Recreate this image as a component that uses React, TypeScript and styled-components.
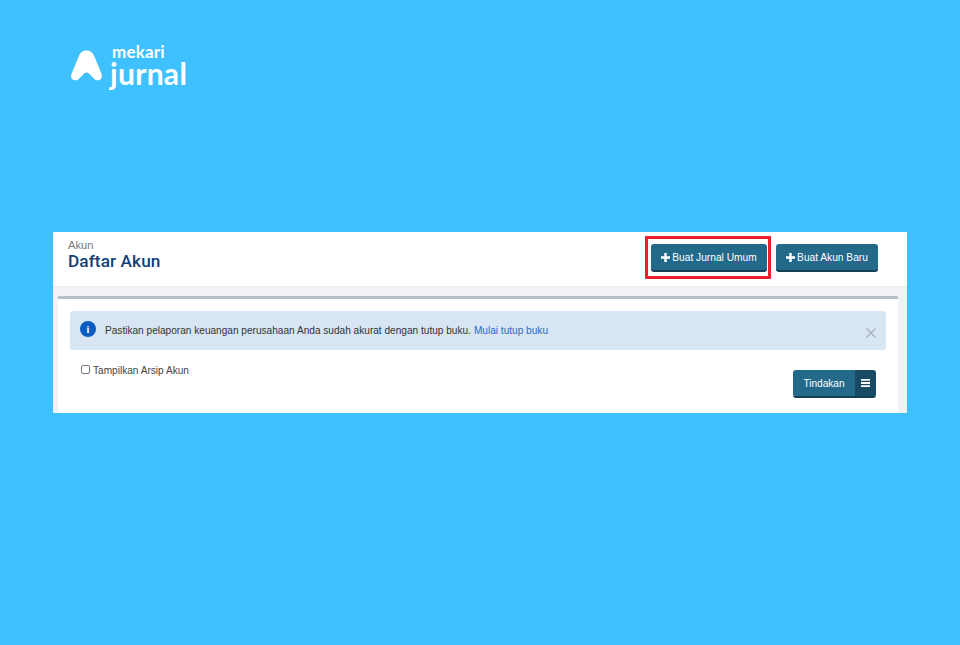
import React from "react";
import styled, { createGlobalStyle } from "styled-components";

const Global = createGlobalStyle`
  html, body { margin: 0; padding: 0; background: #40c1ff; }
  * { box-sizing: border-box; }
  body { font-family: "Liberation Sans", Arial, sans-serif; }
`;
const Page = styled.div`
  width: 960px; height: 645px; background: #40c1ff; overflow: hidden;
  padding: 44px 53px 0; display: flex; flex-direction: column;
`;
const Logo = styled.div`
  display: flex; align-items: flex-start; gap: 6px; margin-left: 18px; height: 188px;
  color: #fff; font-family: Lato, sans-serif;
`;
const LogoMark = styled.svg`margin-top: 5px; flex: none;`;
const LogoWords = styled.div`display: flex; flex-direction: column;`;
const LogoTop = styled.span`font-size: 17px; font-weight: 700; line-height: 15px; letter-spacing: .2px; margin-left: 3px;`;
const LogoMain = styled.span`font-size: 30px; font-weight: 700; line-height: 28px; letter-spacing: .3px; margin-left: 1px;`;
const Panel = styled.div`width: 854px; height: 181px; background: #f0f2f7; display: flex; flex-direction: column; overflow: hidden;`;
const Header = styled.div`
  height: 55px; flex: none; background: #fff; border-bottom: 1px solid #e8eaee;
  display: flex; justify-content: space-between; padding: 7px 29px 0 15px;
`;
const Crumb = styled.div`font-size: 11.2px; line-height: 12px; color: #7a7a7a;`;
const Title = styled.h1`margin: 0; font: 500 17.2px/20px Roboto, sans-serif; color: #133f78; letter-spacing: .1px;`;
const Actions = styled.div`display: flex; gap: 5px; padding-top: 5px; align-items: flex-start;`;
const Highlight = styled.div`border: 3px solid #e9202b; margin-top: -8px; padding: 5px 1px 4px 3px; border-radius: 1px;`;
const Btn = styled.button`
  height: 28px; border: 0; border-bottom: 2px solid #143f55; border-radius: 3px; background: #22698a; color: #fff;
  font: 10.2px "Liberation Sans", Arial, sans-serif; white-space: nowrap; display: flex; align-items: center; justify-content: center;
  gap: 2px; padding: 1px 0 0; width: ${p => p.$w}px;
`;
const Body = styled.div`flex: 1; padding: 9px 9px 0 5px;`;
const Card = styled.div`height: 100%; background: #fff; border-top: 3px solid #b3c1c8; padding: 12px 12px 0 12px;`;
const Alert = styled.div`
  height: 39px; background: #d8e5f4; border-radius: 3px; display: flex; align-items: center;
  padding: 0 10px 1px; font-size: 10.1px; color: #333;
`;
const InfoDot = styled.div`
  width: 16px; height: 16px; border-radius: 50%; background: #0a5cc0; color: #fff; flex: none; margin-right: 9px; margin-bottom: 2px;
  display: flex; align-items: center; justify-content: center; font: 700 10px "Liberation Serif", serif;
`;
const AlertLink = styled.a`color: #1f6bc4; margin-left: 3px;`;
const Close = styled.svg`margin-left: auto; margin-top: 6px; flex: none;`;
const Row = styled.div`display: flex; justify-content: space-between; align-items: flex-start; padding: 14px 10px 0 11px;`;
const CheckLabel = styled.label`display: flex; align-items: center; gap: 3px; font-size: 10.1px; color: #444; line-height: 13px;`;
const Box = styled.span`width: 9px; height: 9px; border: 1px solid #777; border-radius: 2px; background: #fff; margin-top: -2px;`;
const Split = styled.div`
  display: flex; width: 83px; height: 28px; margin-top: 6px; border-radius: 3px; overflow: hidden; border-bottom: 2px solid #143f55;
`;
const SplitMain = styled.div`flex: 1; background: #22698a; color: #fff; font-size: 10.1px; display: flex; align-items: center; justify-content: center;`;
const SplitSide = styled.div`width: 21px; background: #174a63; display: flex; align-items: center; justify-content: center;`;

const Plus = () => (
  <svg width="9" height="9" viewBox="0 0 9 9"><path d="M3.3 0h2.4v3.3H9v2.4H5.7V9H3.3V5.7H0V3.3h3.3z" fill="#fff" /></svg>
);

export default function App() {
  return (
    <Page>
      <Global />
      <Logo>
        <LogoMark width="32" height="33" viewBox="0 0 34 34">
          <path d="M16.5 1 C21 1 23.5 3.5 25.5 9 L32.5 26 C34.5 31.5 28.5 35 24.5 31 L19.5 26 C17.5 24 15.5 24 13.5 26 L8.5 31 C4.5 35 -1.5 31.5 .5 26 L7.5 9 C9.5 3.5 12 1 16.5 1 Z" fill="#fff" />
        </LogoMark>
        <LogoWords>
          <LogoTop>mekari</LogoTop>
          <LogoMain>jurnal</LogoMain>
        </LogoWords>
      </Logo>
      <Panel>
        <Header>
          <div>
            <Crumb>Akun</Crumb>
            <Title>Daftar Akun</Title>
          </div>
          <Actions>
            <Highlight>
              <Btn $w={116}><Plus />Buat Jurnal Umum</Btn>
            </Highlight>
            <Btn $w={102}><Plus />Buat Akun Baru</Btn>
          </Actions>
        </Header>
        <Body>
          <Card>
            <Alert>
              <InfoDot>i</InfoDot>
              Pastikan pelaporan keuangan perusahaan Anda sudah akurat dengan tutup buku.
              <AlertLink>Mulai tutup buku</AlertLink>
              <Close width="10" height="10" viewBox="0 0 10 10"><path d="M.5.5l9 9M9.5.5l-9 9" stroke="#a3adb5" strokeWidth="1.1" fill="none" /></Close>
            </Alert>
            <Row>
              <CheckLabel><Box />Tampilkan Arsip Akun</CheckLabel>
              <Split>
                <SplitMain>Tindakan</SplitMain>
                <SplitSide>
                  <svg width="9" height="8" viewBox="0 0 9 8"><path d="M0 0h9v1.8H0zM0 3.1h9v1.8H0zM0 6.2h9V8H0z" fill="#fff" /></svg>
                </SplitSide>
              </Split>
            </Row>
          </Card>
        </Body>
      </Panel>
    </Page>
  );
}
